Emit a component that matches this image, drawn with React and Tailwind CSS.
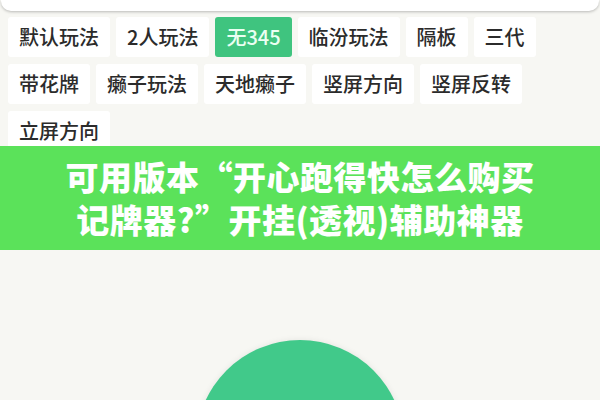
const ROWS = [
  ['默认玩法', '2人玩法', '无345', '临汾玩法', '隔板', '三代'],
  ['带花牌', '癞子玩法', '天地癞子', '竖屏方向', '竖屏反转'],
  ['立屏方向'],
];

export default function App() {
  return (
    <div
      className="w-[600px] h-[400px] overflow-hidden bg-[#f7f7f3] relative"
      style={{ fontFamily: '"Noto Sans CJK SC", "Noto Sans", sans-serif' }}
    >
      <div className="h-[11px] mx-[1px] bg-white rounded-b-[10px] shadow-[0_1px_3px_rgba(0,0,0,0.25)]" />

      <div className="h-[135px] overflow-hidden pt-[6px] px-2 flex flex-col gap-[7px]">
        {ROWS.map((row, i) => (
          <div key={i} className="flex gap-[6px]">
            {row.map((t) => (
              <Chip key={t} label={t} active={t === '无345'} />
            ))}
          </div>
        ))}
      </div>

      <div className="h-[104px] bg-[#5be25a] flex flex-col items-center pt-[9px] text-white font-black text-[33px] leading-[43px] tracking-[0.5px]">
        <div>可用版本“开心跑得快怎么购买</div>
        <div>记牌器?”开挂(透视)辅助神器</div>
      </div>

      <div className="flex justify-center pt-[90px]">
        <div className="w-[208px] h-[208px] rounded-full bg-[#41c98a] shadow-[0_0_6px_rgba(0,0,0,0.08)]" />
      </div>
    </div>
  );
}

function Chip({ label, active }) {
  return (
    <div
      className={
        active
          ? 'h-[40px] px-[11px] flex items-center rounded-[3px] bg-[#3fc47f] text-[#eafff2] text-[20px] font-medium'
          : 'h-[40px] px-[11px] flex items-center rounded-[3px] bg-white text-[#2b2b2b] text-[20px] font-medium'
      }
    >
      {label}
    </div>
  );
}
